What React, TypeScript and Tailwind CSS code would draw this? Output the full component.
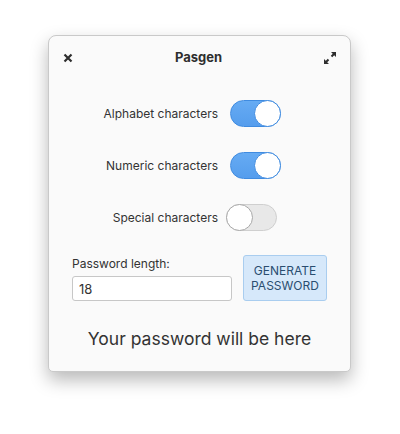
import React, { useState } from 'react';

const Toggle = ({ on, onClick }: { on: boolean; onClick: () => void }) => (
  <button
    onClick={onClick}
    className={`relative block w-[51px] h-[27px] rounded-full border ${
      on ? 'bg-gradient-to-b from-[#66abf3] to-[#559ded] border-[#3f8be0]' : 'bg-[#e8e8e8] border-[#cfcfcf]'
    }`}
  >
    <span
      className={`absolute top-[-1px] w-[27px] h-[27px] rounded-full bg-white border ${
        on ? 'right-[-1px] border-[#3f8be0]' : 'left-[-1px] border-[#a8a8a8]'
      }`}
    />
  </button>
);

const App = () => {
  const [opts, setOpts] = useState([true, true, false]);
  const labels = ['Alphabet characters', 'Numeric characters', 'Special characters'];

  return (
    <div className="w-[400px] h-[434px] bg-white pt-[35px] pl-[48px]" style={{ fontFamily: 'Inter, "Noto Sans", sans-serif' }}>
      <div className="w-[303px] h-[337px] bg-[#fafafa] rounded-t-[8px] rounded-b-[5px] border border-[#c9c9c9] shadow-[0_8px_18px_rgba(0,0,0,0.28)] flex flex-col">
        <div className="h-[44px] flex items-center justify-between px-[14px]">
          <svg width="10" height="10" viewBox="0 0 10 10">
            <path d="M1.5 1.5 L8.5 8.5 M8.5 1.5 L1.5 8.5" stroke="#2e2e2e" strokeWidth="2.2" />
          </svg>
          <span className="text-[13px] font-bold text-[#2e2e2e]">Pasgen</span>
          <svg width="12" height="12" viewBox="0 0 12 12">
            <path d="M7 0 H12 V5 Z M0 7 V12 H5 Z" fill="#2e2e2e" />
            <path d="M10 2 L7.5 4.5 M2 10 L4.5 7.5" stroke="#2e2e2e" strokeWidth="2" />
          </svg>
        </div>

        <div className="mt-[20px] flex flex-col gap-[25px]">
          {labels.map((label, i) => (
            <div key={label} className="flex items-center h-[27px]">
              <span className="w-[169px] text-right text-[12px] text-[#333]">{label}</span>
              <div className={`flex ${i === 2 ? 'ml-[8px]' : 'ml-[12px]'}`}>
                <Toggle on={opts[i]} onClick={() => setOpts(opts.map((v, j) => (j === i ? !v : v)))} />
              </div>
            </div>
          ))}
        </div>

        <div className="mt-[24px] px-[23px] flex items-end justify-between">
          <div className="flex flex-col">
            <span className="text-[12px] leading-[16px] text-[#333] mb-[4px]">Password length:</span>
            <input
              defaultValue="18"
              className="w-[160px] h-[25px] bg-white border border-[#c7c7c7] rounded-[3px] px-[6px] text-[13px] text-[#333] outline-none"
            />
          </div>
          <button className="w-[84px] h-[46px] bg-[#d6e8fa] border border-[#a9cdef] rounded-[3px] text-[12px] leading-[15px] text-[#2a4d70] uppercase">
            Generate
            <br />
            Password
          </button>
        </div>

        <div className="mt-[26px] text-center text-[17.5px] leading-[24px] text-[#333]">Your password will be here</div>
      </div>
    </div>
  );
};

export default App;
